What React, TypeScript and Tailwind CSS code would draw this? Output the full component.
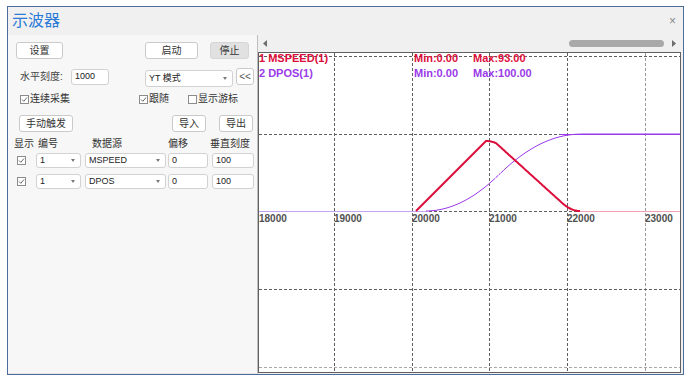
import React from 'react';

// ─── Small form pieces ──────────────────────────────────────────────────────────
function Btn({ label, className = '', pressed = false }: { label: string; className?: string; pressed?: boolean }) {
  return (
    <div
      className={`flex h-[17px] items-center justify-center rounded-[3px] border text-[10px] leading-none text-[#333] ${
        pressed ? 'border-[#d6d6d6] bg-[#e1e1e1]' : 'border-[#cacaca] bg-white'
      } ${className}`}
    >
      {label}
    </div>
  );
}

function Check({ checked = true }: { checked?: boolean }) {
  return (
    <div className="flex h-[9px] w-[9px] shrink-0 items-center justify-center border border-[#8c8c8c] bg-white">
      {checked && (
        <svg width="7" height="7" viewBox="0 0 7 7">
          <polyline points="1,3.5 2.8,5.3 6,1.5" fill="none" stroke="#6a6a6a" strokeWidth="1" />
        </svg>
      )}
    </div>
  );
}

function Select({ value, className = '' }: { value: string; className?: string }) {
  return (
    <div
      className={`flex items-center justify-between rounded-[3px] border border-[#d2d2d2] bg-white pl-[3px] pr-[5px] text-[9px] leading-none text-[#222] ${className}`}
    >
      <span>{value}</span>
      <svg width="4" height="3" viewBox="0 0 4 3">
        <polygon points="0,0 4,0 2,3" fill="#7a7a7a" />
      </svg>
    </div>
  );
}

function Input({ value, className = '' }: { value: string; className?: string }) {
  return (
    <div
      className={`flex items-center rounded-[3px] border border-[#d2d2d2] bg-white pl-[3px] text-[9px] leading-none text-[#222] ${className}`}
    >
      {value}
    </div>
  );
}

// ─── Chart data ─────────────────────────────────────────────────────────────────
const ZERO = 158;
const TOP = 81;

function velocity(x: number) {
  if (x < 157) return 0;
  if (x < 227) return (x - 157) / 70;
  if (x < 237) return 1 - Math.pow((x - 227) / 10, 2) * 0.03;
  if (x < 303) return 0.97 * (312 - x) / 75;
  if (x < 321) return Math.pow((321 - x) / 18, 2) * (0.97 * 9 / 75);
  return 0;
}

function buildCurves() {
  const red: string[] = [];
  const purple: string[] = [];
  let total = 0;
  for (let x = 0; x <= 421; x++) total += velocity(x);
  let acc = 0;
  const cum: number[] = [];
  for (let x = 0; x <= 421; x++) {
    acc += velocity(x);
    cum.push(acc / total);
  }
  for (let x = 157; x <= 321; x++) {
    red.push(`${x},${(ZERO - velocity(x) * 70).toFixed(1)}`);
  }
  const shift = 10;
  for (let x = 167; x <= 421; x++) {
    const p = cum[Math.max(0, x - shift)];
    purple.push(`${x},${(ZERO - p * (ZERO - TOP)).toFixed(1)}`);
  }
  return { red: red.join(' '), purple: purple.join(' ') };
}

const curves = buildCurves();
const vLines = [75, 153, 230, 308, 386];
const hLines = [3, 81, 158, 236, 314];
const ticks = [
  { x: 0, label: '18000' },
  { x: 75, label: '19000' },
  { x: 153, label: '20000' },
  { x: 230, label: '21000' },
  { x: 308, label: '22000' },
  { x: 386, label: '23000' },
];

function Scope() {
  return (
    <svg width="421" height="319" viewBox="0 0 421 319" className="block" shapeRendering="crispEdges">
      {/* grid */}
      {vLines.map((x, i) => (
        <line
          key={`v${x}`}
          x1={x + 0.5}
          y1={0}
          x2={x + 0.5}
          y2={319}
          stroke={i === 4 ? '#9a9a9a' : '#5e5e5e'}
          strokeWidth="1"
          strokeDasharray="3 2"
        />
      ))}
      {hLines.map((y, i) => (
        <line
          key={`h${y}`}
          x1={0}
          y1={y + 0.5}
          x2={421}
          y2={y + 0.5}
          stroke={i === 4 ? '#a8a8a8' : '#5e5e5e'}
          strokeWidth="1"
          strokeDasharray="3 2"
        />
      ))}

      {/* zero level traces */}
      <line x1={0} y1={ZERO + 0.5} x2={168} y2={ZERO + 0.5} stroke="#c7a3f3" strokeWidth="1.5" />
      <line x1={321} y1={ZERO + 0.5} x2={421} y2={ZERO + 0.5} stroke="#f3a3b4" strokeWidth="1.5" />
      <line x1={301} y1={TOP + 0.5} x2={421} y2={TOP + 0.5} stroke="#9a3ae8" strokeWidth="1" />

      <g shapeRendering="geometricPrecision">
        <polyline points={curves.purple} fill="none" stroke="#9a3ae8" strokeWidth="1" />
        <polyline points={curves.red} fill="none" stroke="#dc0f3c" strokeWidth="2" strokeLinejoin="round" />
      </g>

      {/* legend */}
      <g fontFamily="'Liberation Sans', Arial, sans-serif" fontSize="11" fontWeight="bold" shapeRendering="geometricPrecision">
        <text x="0" y="9" fill="#dc0f3c">1 MSPEED(1)</text>
        <text x="155" y="9" fill="#dc0f3c">Min:0.00</text>
        <text x="214" y="9" fill="#dc0f3c">Max:93.00</text>
        <text x="0" y="24" fill="#9a3ae8">2 DPOS(1)</text>
        <text x="155" y="24" fill="#9a3ae8">Min:0.00</text>
        <text x="214" y="24" fill="#9a3ae8">Max:100.00</text>
      </g>

      {/* axis labels */}
      <g fontFamily="'Liberation Sans', Arial, sans-serif" fontSize="10" fontWeight="bold" fill="#505050" shapeRendering="geometricPrecision">
        {ticks.map((t) => (
          <text key={t.label} x={t.x} y={169}>
            {t.label}
          </text>
        ))}
      </g>
    </svg>
  );
}

export default function App() {
  return (
    <div className="h-[385px] w-[692px] bg-white pl-[7px] pt-[6px] font-['Liberation_Sans','Noto_Sans_CJK_SC',sans-serif]">
      <div className="flex h-[369px] w-[677px] flex-col border border-[#4c6c9c] bg-[#f0f0f0]">
        {/* Title bar */}
        <div className="flex h-[28px] shrink-0 items-center justify-between pl-[4px] pr-[7px]">
          <span className="text-[16px] leading-none text-[#2a7bd6]">示波器</span>
          <span className="text-[12px] leading-none text-[#8a8a8a]">×</span>
        </div>

        <div className="flex h-[339px]">
          {/* Control panel */}
          <div className="flex w-[250px] shrink-0 flex-col border-r border-[#bdbdbd] border-b border-b-[#e6e6e6] bg-[#f7f7f7] text-[10px] leading-none text-[#333]">
            <div className="mt-[7px] flex h-[17px]">
              <Btn label="设置" className="ml-[8px] w-[47px]" />
              <Btn label="启动" className="ml-[82px] w-[53px]" />
              <Btn label="停止" pressed className="ml-[12px] w-[39px]" />
            </div>

            <div className="mt-[8px] flex h-[19px] items-center">
              <span className="ml-[12px] w-[51px] text-[#444]">水平刻度:</span>
              <Input value="1000" className="h-[16px] w-[38px]" />
              <Select value="YT 模式" className="ml-[36px] mt-[3px] h-[17px] w-[88px]" />
              <Btn label="<<" className="ml-[3px] w-[18px] text-[9px] text-[#555]" />
            </div>

            <div className="mt-[7px] flex h-[12px] items-center">
              <div className="ml-[12px] flex w-[119px] items-center gap-[1px]">
                <Check />
                <span>连续采集</span>
              </div>
              <div className="flex w-[49px] items-center gap-[1px]">
                <Check />
                <span>跟随</span>
              </div>
              <div className="flex items-center gap-[1px]">
                <Check checked={false} />
                <span>显示游标</span>
              </div>
            </div>

            <div className="mt-[10px] flex h-[16px]">
              <Btn label="手动触发" className="ml-[11px] h-[16px] w-[54px]" />
              <Btn label="导入" className="ml-[99px] h-[16px] w-[34px]" />
              <Btn label="导出" className="ml-[13px] h-[16px] w-[34px]" />
            </div>

            <div className="mt-[7px] flex h-[11px] items-center pl-[6px]">
              <span className="w-[24px]">显示</span>
              <span className="w-[54px]">编号</span>
              <span className="w-[76px]">数据源</span>
              <span className="w-[42px]">偏移</span>
              <span>垂直刻度</span>
            </div>

            {['MSPEED', 'DPOS'].map((src, i) => (
              <div key={src} className={`${i === 0 ? 'mt-[4px]' : 'mt-[6px]'} flex h-[15px] items-center`}>
                <div className="ml-[9px]">
                  <Check />
                </div>
                <Select value="1" className="ml-[10px] h-[15px] w-[45px]" />
                <Select value={src} className="ml-[4px] h-[15px] w-[81px]" />
                <Input value="0" className="ml-[2px] h-[15px] w-[40px]" />
                <Input value="100" className="ml-[4px] h-[15px] w-[42px]" />
              </div>
            ))}
          </div>

          {/* Scope area */}
          <div className="flex w-[424px] flex-col">
            <div className="flex h-[17px] items-center pl-[5px]">
              <svg width="4" height="7" viewBox="0 0 4 7">
                <polygon points="4,0 4,7 0,3.5" fill="#6e6e6e" />
              </svg>
              <div className="flex-1" />
              <div className="h-[7px] w-[95px] rounded-full bg-[#a9a9a9]" />
              <svg width="4" height="7" viewBox="0 0 4 7" className="ml-[8px] mr-[6px]">
                <polygon points="0,0 0,7 4,3.5" fill="#6e6e6e" />
              </svg>
            </div>
            <div className="h-[321px] w-[423px] border border-[#606060] bg-white">
              <Scope />
            </div>
          </div>
        </div>
      </div>
    </div>
  );
}
